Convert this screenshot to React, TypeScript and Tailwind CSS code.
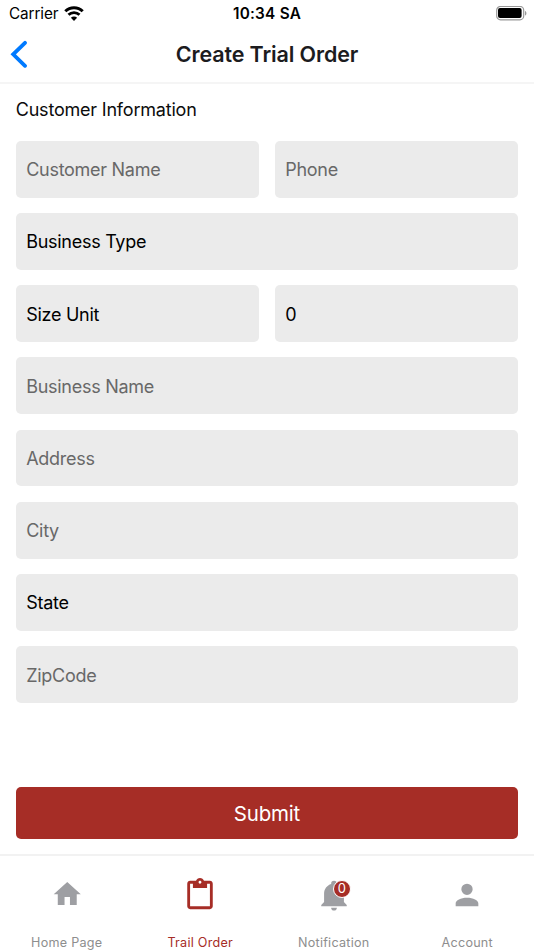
import { useState, type FormEvent } from 'react';
import clsx from 'clsx';

interface IField {
  name: string;
  label: string;
  half?: boolean;
  select?: boolean;
}

const FIELDS: IField[] = [
  { name: 'customerName', label: 'Customer Name', half: true },
  { name: 'phone', label: 'Phone', half: true },
  { name: 'businessType', label: 'Business Type', select: true },
  { name: 'sizeUnit', label: 'Size Unit', half: true, select: true },
  { name: 'size', label: '0', half: true, select: true },
  { name: 'businessName', label: 'Business Name' },
  { name: 'address', label: 'Address' },
  { name: 'city', label: 'City' },
  { name: 'state', label: 'State', select: true },
  { name: 'zipCode', label: 'ZipCode' },
];

const TABS = [
  {
    label: 'Home Page',
    path: 'M10 20v-6h4v6h5v-8h3L12 3 2 12h3v8z',
    iconClass: 'size-[32.5px]',
  },
  {
    label: 'Trail Order',
    path: 'M19 2h-4.18C14.4.84 13.3 0 12 0S9.6.84 9.18 2H5c-1.1 0-2 .9-2 2v16c0 1.1.9 2 2 2h14c1.1 0 2-.9 2-2V4c0-1.1-.9-2-2-2zm-7 0c.55 0 1 .45 1 1s-.45 1-1 1-1-.45-1-1 .45-1 1-1zm7 18H5V4h2v3h10V4h2v16z',
    iconClass: 'size-[34px]',
  },
  {
    label: 'Notification',
    path: 'M21 19v1H3v-1l2-2v-6c0-3.1 2.03-5.83 5-6.71V4a2 2 0 1 1 4 0v.29c2.97.88 5 3.61 5 6.71v6l2 2m-7 2a2 2 0 0 1-4 0',
    iconClass: 'size-[34px]',
    badge: 0,
  },
  {
    label: 'Account',
    path: 'M12 4a4 4 0 1 1 0 8 4 4 0 0 1 0-8m0 10c4.42 0 8 1.79 8 4v2H4v-2c0-2.21 3.58-4 8-4z',
    iconClass: 'size-[34px]',
  },
];

function StatusBar() {
  return (
    <div className="grid h-7 grid-cols-3 items-center pr-[7px] pl-[9px] text-black">
      <div className="flex items-center gap-[5.5px]">
        <span className="text-[15.3px] leading-7 tracking-[-0.1px]">Carrier</span>
        <svg viewBox="0 0 20 15" className="mb-[2px] h-[15px] w-5" fill="none" stroke="currentColor">
          <path d="M1.3 5.2a12.4 12.4 0 0 1 17.4 0" strokeWidth="3" />
          <path d="M4.5 8.8a7.8 7.8 0 0 1 11 0" strokeWidth="2.8" />
          <path d="M10 15 6.9 11.8a4.4 4.4 0 0 1 6.2 0z" fill="currentColor" stroke="none" />
        </svg>
      </div>
      <span className="pr-[2px] text-center text-[15.3px] leading-7 font-semibold tracking-[0.25px]">
        10:34 SA
      </span>
      <svg viewBox="0 0 31 15" className="mb-[2px] h-[15px] w-[31px] justify-self-end">
        <rect x="0.7" y="0.4" width="27" height="13.4" rx="3.8" fill="none" stroke="#999" strokeWidth="1.2" />
        <rect x="2" y="2" width="23.6" height="10" rx="2" fill="#000" />
        <path d="M29 5c1.9.7 1.9 3.9 0 4.6z" fill="#999" />
      </svg>
    </div>
  );
}

export default function App() {
  const [formData, setFormData] = useState<Record<string, string>>({});
  const [activeTab, setActiveTab] = useState('Trail Order');

  const handleSubmit = (e: FormEvent) => {
    e.preventDefault();
  };

  return (
    <div className="flex h-[950px] w-[534px] flex-col overflow-hidden bg-white font-['Inter',sans-serif]">
      <StatusBar />

      <header className="grid h-[56px] grid-cols-[40px_1fr_40px] items-center border-b-2 border-[#f5f5f5] pb-[2px]">
        <button type="button" aria-label="Back" className="pl-[10px] text-[#007aff]">
          <svg viewBox="0 0 18 28" className="h-7 w-[18px]" fill="none" stroke="currentColor">
            <path d="M15 2.8 3.2 14.3 15 25.8" strokeWidth="3.8" strokeLinecap="round" />
          </svg>
        </button>
        <h1 className="text-center text-[21.5px] leading-7 font-semibold tracking-[-0.13px] text-[#1c1c1e]">
          Create Trial Order
        </h1>
      </header>

      <form onSubmit={handleSubmit} className="flex flex-1 flex-col px-[15.7px] pb-[15px]">
        <h2 className="mt-[12.5px] text-[18px] leading-[26px] tracking-[-0.2px] text-[#0c0c0c]">
          Customer Information
        </h2>
        <div className="mt-[18.4px] grid grid-cols-2 gap-[15.5px]">
          {FIELDS.map((field) => (
            <input
              key={field.name}
              name={field.name}
              readOnly={field.select}
              placeholder={field.label}
              value={formData[field.name] ?? ''}
              onChange={(e) =>
                setFormData((prev) => ({ ...prev, [field.name]: e.target.value }))
              }
              className={clsx(
                'h-[56.7px] w-full rounded-[5px] bg-[#ebebeb] px-[10.5px] pt-px text-[18px] tracking-[-0.28px] text-black outline-none',
                field.half ? 'col-span-1' : 'col-span-2',
                field.select ? 'placeholder:text-black' : 'placeholder:text-[#686868]',
              )}
            />
          ))}
        </div>
        <button
          type="submit"
          className="mt-auto h-[52px] rounded-[5px] bg-[#a62d26] pt-[2px] text-[20.5px] tracking-[-0.2px] text-white"
        >
          Submit
        </button>
      </form>

      <nav className="grid h-[96px] grid-cols-4 border-t-2 border-[#f2f2f2]">
        {TABS.map((tab) => (
          <button
            key={tab.label}
            type="button"
            onClick={() => setActiveTab(tab.label)}
            className={clsx(
              'flex flex-col items-center pt-[22px]',
              activeTab === tab.label ? 'text-[#a62d26]' : 'text-[#8e8e8e]',
            )}
          >
            <span className="relative flex h-[34px] items-start">
              <svg
                viewBox="0 0 24 24"
                className={clsx(
                  tab.iconClass,
                  activeTab === tab.label ? 'fill-[#a62d26]' : 'fill-[#9e9fa3]',
                )}
              >
                <path d={tab.path} />
              </svg>
              {tab.badge !== undefined && (
                <span className="absolute top-[1.5px] left-[16px] flex size-[18px] items-center justify-center rounded-full border border-white bg-[#a62d26] text-[13px] leading-none text-white">
                  {tab.badge}
                </span>
              )}
            </span>
            <span className="mt-[22.5px] text-[12.6px] leading-4 tracking-[0.25px]">{tab.label}</span>
          </button>
        ))}
      </nav>
    </div>
  );
}
